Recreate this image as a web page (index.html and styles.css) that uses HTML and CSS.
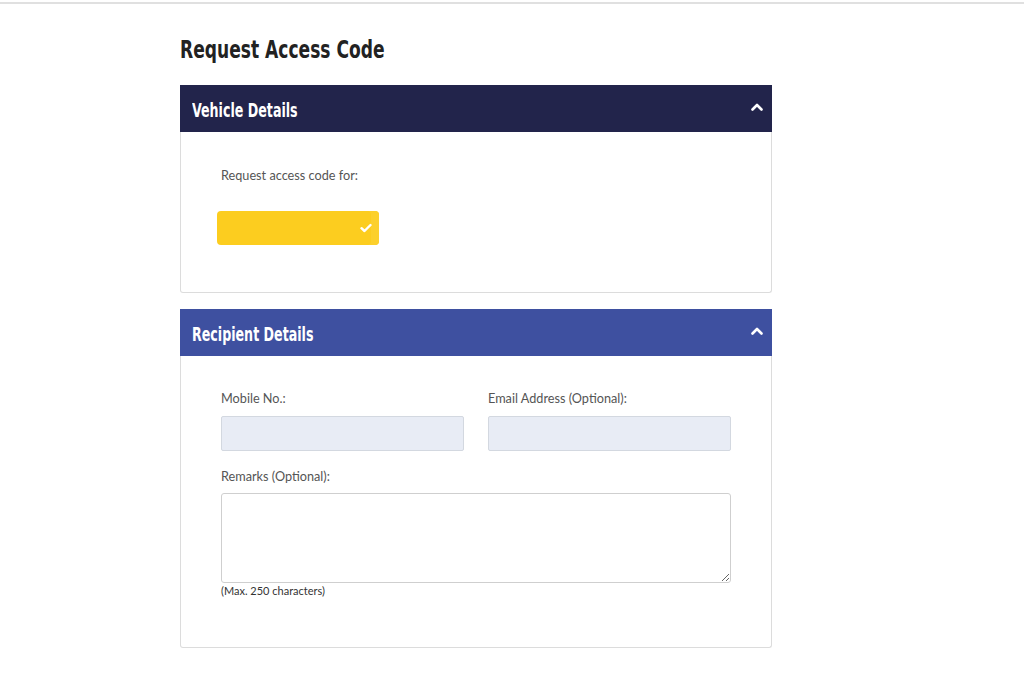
FILE: index.html
```html
<!DOCTYPE html>
<html lang="en">
<head>
<meta charset="utf-8">
<title>Request Access Code</title>
<link rel="stylesheet" href="styles.css">
</head>
<body>
<div class="topline"></div>
<main class="page">
  <h1 class="title"><span class="narrow">Request Access Code</span></h1>

  <section class="panel">
    <header class="panel-head head-dark">
      <span class="panel-title narrow">Vehicle Details</span>
      <svg class="chev" width="12" height="8" viewBox="0 0 12 8"><path d="M1.5 6.5 L6 2 L10.5 6.5" fill="none" stroke="#fff" stroke-width="2.6" stroke-linecap="round" stroke-linejoin="round"/></svg>
    </header>
    <div class="panel-body body-vehicle">
      <div class="label">Request access code for:</div>
      <button class="yellow-btn" type="button">
        <svg class="check" width="12" height="10" viewBox="0 0 12 10"><path d="M1.5 5.2 L4.5 8 L10.5 2" fill="none" stroke="#fff" stroke-width="2.4" stroke-linecap="round" stroke-linejoin="round"/></svg>
      </button>
    </div>
  </section>

  <section class="panel">
    <header class="panel-head head-blue">
      <span class="panel-title narrow">Recipient Details</span>
      <svg class="chev" width="12" height="8" viewBox="0 0 12 8"><path d="M1.5 6.5 L6 2 L10.5 6.5" fill="none" stroke="#fff" stroke-width="2.6" stroke-linecap="round" stroke-linejoin="round"/></svg>
    </header>
    <div class="panel-body body-recipient">
      <div class="row">
        <div class="field">
          <div class="label">Mobile No.:</div>
          <input class="input" type="text">
        </div>
        <div class="field">
          <div class="label">Email Address (Optional):</div>
          <input class="input" type="text">
        </div>
      </div>
      <div class="field field-remarks">
        <div class="label">Remarks (Optional):</div>
        <textarea class="textarea"></textarea>
        <div class="hint">(Max. 250 characters)</div>
      </div>
    </div>
  </section>
</main>
</body>
</html>
```

FILE: styles.css
```css
html, body {
  margin: 0;
  padding: 0;
  background: #fff;
}
body {
  font-family: Lato, "Open Sans", sans-serif;
  color: #555;
}
.topline {
  height: 2px;
  margin-top: 2px;
  background: #e0e0e0;
}
.page {
  width: 592px;
  margin-left: 180px;
  padding-top: 30px;
}
.narrow {
  display: inline-block;
  font-family: "Liberation Sans Narrow", "DejaVu Sans Condensed", sans-serif;
  font-weight: 700;
  transform-origin: 0 50%;
  white-space: nowrap;
}
.title {
  margin: 0 0 21px 0;
  font-size: 25px;
  line-height: 29px;
  color: #222;
}
.title .narrow {
  transform: scaleX(0.76);
}
.panel {
  margin-bottom: 16px;
  border-radius: 3px;
}
.panel-head {
  height: 47px;
  box-sizing: border-box;
  display: flex;
  align-items: center;
  justify-content: space-between;
  padding: 0 8px 0 12px;
  color: #fff;
}
.head-dark { background: #22244b; }
.head-blue { background: #3e50a0; }
.panel-title {
  font-size: 19px;
  position: relative;
  top: 1px;
  transform: scaleX(0.74);
}
.chev {
  display: block;
  margin-right: 1px;
  position: relative;
  top: -2px;
}
.panel-body {
  border: 1px solid #dcdcdc;
  border-top: none;
  border-radius: 0 0 3px 3px;
  padding: 0 40px;
}
.body-vehicle {
  height: 161px;
  padding-top: 35px;
  box-sizing: border-box;
}
.label {
  font-size: 12.7px;
  line-height: 16px;
  color: #555;
}
.yellow-btn {
  display: flex;
  justify-content: flex-end;
  align-items: center;
  margin-top: 28px;
  margin-left: -4px;
  width: 162px;
  height: 34px;
  padding: 0 7px 0 0;
  border: none;
  border-radius: 4px;
  background: #fccd1f;
  box-shadow: inset -8px 0 0 #fcd02c;
}
.check { display: block; }
.body-recipient {
  padding-top: 34px;
  padding-bottom: 49px;
}
.row {
  display: grid;
  grid-template-columns: 243px 243px;
  column-gap: 24px;
}
.field .label {
  margin-bottom: 10px;
}
.input {
  display: block;
  width: 100%;
  height: 35px;
  box-sizing: border-box;
  background: #e8ecf5;
  border: 1px solid #d3d8e0;
  border-radius: 2px;
  margin: 0;
}
.field-remarks {
  margin-top: 17px;
}
.field-remarks .label {
  margin-bottom: 9px;
}
.textarea {
  display: block;
  width: 510px;
  height: 90px;
  box-sizing: border-box;
  border: 1px solid #cfcfcf;
  border-radius: 3px;
  margin: 0;
  background: #fff;
}
.hint {
  font-size: 11px;
  line-height: 14px;
  color: #333;
  margin-top: 1px;
}
```
